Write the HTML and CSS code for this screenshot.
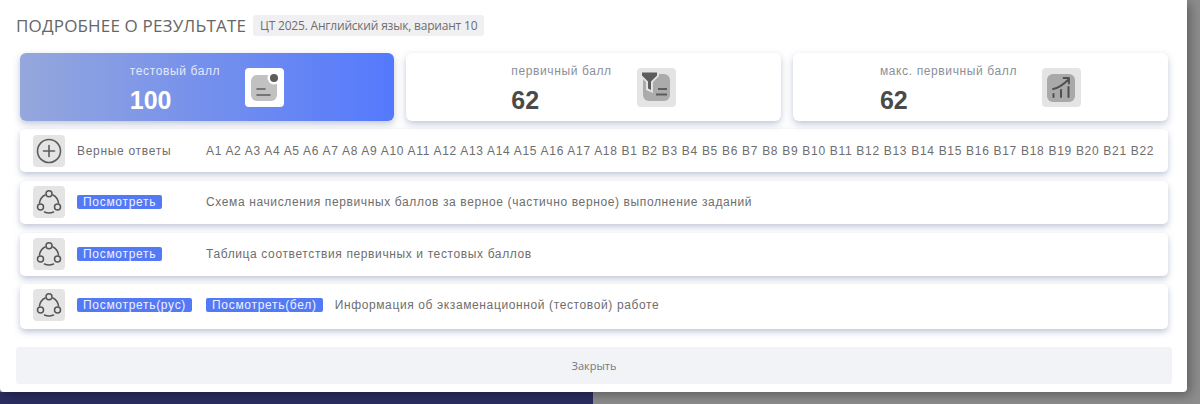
FILE: index.html
```html
<!DOCTYPE html>
<html lang="en">
<head>
    <meta charset="UTF-8">
    <meta name="viewport" content="width=device-width, initial-scale=1.0">
    <title>Подробнее о результате</title>
    <link rel="stylesheet" href="styles.css">
</head>
<body>

    <!-- Modal -->
    <div class="modal">
        <div class="modal-header">
            <h2>Подробнее о результате</h2>
            <span class="chip">ЦТ 2025. Английский язык, вариант 10</span>
        </div>

        <!-- Score cards -->
        <div class="cards">
            <div class="card card-primary">
                <div class="card-text">
                    <div class="card-label">тестовый балл</div>
                    <div class="card-value">100</div>
                </div>
                <div class="card-icon card-icon-white">
                    <svg width="39" height="39" viewBox="0 0 39 39">
                        <rect x="6" y="7" width="26" height="26" rx="6" fill="#c1c1c1"/>
                        <circle cx="29" cy="10" r="6.5" fill="#fff"/>
                        <circle cx="29" cy="10" r="4" fill="#5c5c5c"/>
                        <path d="M12 21h8M12 27h13" stroke="#5c5c5c" stroke-width="1.6" stroke-linecap="round"/>
                    </svg>
                </div>
            </div>
            <div class="card">
                <div class="card-text">
                    <div class="card-label">первичный балл</div>
                    <div class="card-value">62</div>
                </div>
                <div class="card-icon">
                    <svg width="39" height="39" viewBox="0 0 39 39">
                        <rect x="6" y="6" width="27" height="27" rx="6" fill="#ababab"/>
                        <path d="M3 2.500h19v5.500l-6 6v11l-7 -3v-8l-6 -6z" fill="#e3e3e3"/>
                        <path d="M5 4.500h15v3l-6 6v8.500l-3 -1.500v-7l-6 -6z" fill="#5c5c5c"/>
                        <path d="M21 21h9M19 26.500h11" stroke="#5c5c5c" stroke-width="1.800"/>
                    </svg>
                </div>
            </div>
            <div class="card">
                <div class="card-text">
                    <div class="card-label">макс. первичный балл</div>
                    <div class="card-value">62</div>
                </div>
                <div class="card-icon">
                    <svg width="39" height="39" viewBox="0 0 39 39">
                        <rect x="5" y="6" width="28" height="28" rx="6" fill="#a9a9a9"/>
                        <path d="M11 21c6 -1 11 -5 16 -10M21.500 10h5.500v5.500" fill="none" stroke="#4f4f4f" stroke-width="1.800" stroke-linecap="round" stroke-linejoin="round"/>
                        <path d="M11.500 26v3M19 22v7M26.500 19v10" stroke="#4f4f4f" stroke-width="2" stroke-linecap="round"/>
                    </svg>
                </div>
            </div>
        </div>

        <!-- Rows -->
        <div class="row row-answers">
            <div class="row-icon">
                <svg width="32" height="32" viewBox="0 0 32 32">
                    <circle cx="16" cy="16" r="11.500" fill="none" stroke="#5c5c5c" stroke-width="1.600"/>
                    <path d="M16 10.500v11M10.500 16h11" stroke="#5c5c5c" stroke-width="1.600" stroke-linecap="round"/>
                </svg>
            </div>
            <div class="row-label">Верные ответы</div>
            <div class="row-text">A1 A2 A3 A4 A5 A6 A7 A8 A9 A10 A11 A12 A13 A14 A15 A16 A17 A18 B1 B2 B3 B4 B5 B6 B7 B8 B9 B10 B11 B12 B13 B14 B15 B16 B17 B18 B19 B20 B21 B22</div>
        </div>

        <div class="row">
            <div class="row-icon">
                <svg width="32" height="32" viewBox="0 0 32 32">
                    <use href="#share"/>
                </svg>
            </div>
            <div class="row-label"><a class="badge" href="#">Посмотреть</a></div>
            <div class="row-text">Схема начисления первичных баллов за верное (частично верное) выполнение заданий</div>
        </div>

        <div class="row">
            <div class="row-icon">
                <svg width="32" height="32" viewBox="0 0 32 32">
                    <use href="#share"/>
                </svg>
            </div>
            <div class="row-label"><a class="badge" href="#">Посмотреть</a></div>
            <div class="row-text">Таблица соответствия первичных и тестовых баллов</div>
        </div>

        <div class="row row-last">
            <div class="row-icon">
                <svg width="32" height="32" viewBox="0 0 32 32">
                    <use href="#share"/>
                </svg>
            </div>
            <div class="row-label"><a class="badge" href="#">Посмотреть(рус)</a></div>
            <a class="badge badge-second" href="#">Посмотреть(бел)</a>
            <div class="row-text">Информация об экзаменационной (тестовой) работе</div>
        </div>

        <button class="close-btn">Закрыть</button>
    </div>

    <!-- Page behind the modal -->
    <div class="page-strip"></div>

    <svg class="icon-defs" width="0" height="0">
        <defs>
            <g id="share" fill="none" stroke="#555" stroke-width="1.500" stroke-linecap="round">
                <circle cx="16" cy="7.800" r="3"/>
                <circle cx="7.500" cy="21" r="3"/>
                <circle cx="24.500" cy="21" r="3"/>
                <path d="M12 9c-3 1.500 -5 4 -5.500 8M20 9c3 1.500 5 4 5.500 8M11.500 26c3 1.300 6 1.300 9 0"/>
            </g>
        </defs>
    </svg>
</body>
</html>
```

FILE: styles.css
```css
* {
    box-sizing: border-box;
    margin: 0;
    padding: 0;
}

body {
    width: 1200px;
    height: 404px;
    overflow: hidden;
    background: #8d8d8d;
    font-family: 'Liberation Sans', sans-serif;
}

.modal {
    position: relative;
    z-index: 1;
    width: 1187px;
    height: 392px;
    padding: 15px 15px 0 16px;
    background: #fff;
    border-radius: 0 0 4px 4px;
    box-shadow: 3px 3px 12px rgba(0, 0, 0, 0.35);
}

.page-strip {
    width: 593px;
    height: 12px;
    background: #2b2d62;
}

.icon-defs {
    display: block;
}

/* Header */
.modal-header {
    display: flex;
    align-items: center;
    gap: 7px;
    height: 21px;
    margin-bottom: 17px;
}

.modal-header h2 {
    font-family: 'Open Sans', sans-serif;
    font-size: 17px;
    font-weight: 400;
    letter-spacing: 0.17px;
    text-transform: uppercase;
    color: #666;
    white-space: nowrap;
}

.chip {
    height: 21px;
    padding: 0 7px;
    font-family: 'Open Sans', sans-serif;
    font-size: 12px;
    letter-spacing: -0.2px;
    line-height: 21px;
    color: #6e6e6e;
    background: #f0f0f2;
    border-radius: 3px;
    white-space: nowrap;
}

/* Score cards */
.cards {
    display: flex;
    gap: 12px;
    margin: 0 4px 8px;
}

.card {
    flex: 1;
    display: flex;
    justify-content: center;
    align-items: center;
    gap: 25px;
    height: 68px;
    background: #fff;
    border-radius: 6px;
    box-shadow: 0 3px 7px rgba(90, 110, 150, 0.38);
}

.card-primary {
    flex: 0 0 374px;
    background: linear-gradient(90deg, #95a7dc, #5479fd);
}

.card-text {
    padding-top: 3px;
}

.card-label {
    font-size: 12px;
    letter-spacing: 0.62px;
    color: #8a8f99;
    margin-bottom: 8px;
}

.card-value {
    font-size: 25px;
    line-height: 28px;
    font-weight: bold;
    color: #4a4a4a;
}

.card-primary .card-label {
    color: #e4e9fa;
}

.card-primary .card-value {
    color: #fff;
}

.card-icon {
    width: 39px;
    height: 39px;
    background: #e4e4e4;
    border-radius: 4px;
}

.card-icon-white {
    background: #fff;
}

.card-icon svg,
.row-icon svg {
    display: block;
}

/* Rows */
.row {
    display: flex;
    align-items: center;
    height: 43px;
    margin: 0 4px 9px;
    padding: 0 0 2px 13px;
    background: #fff;
    border-radius: 5px;
    box-shadow: 0 3px 6px rgba(90, 110, 150, 0.38);
    font-size: 12px;
    letter-spacing: 0.7px;
    color: #6e6e6e;
    white-space: nowrap;
}

.row-answers {
    padding-bottom: 0;
}

.row-last {
    height: 45px;
    margin-top: -1px;
    margin-bottom: 18px;
    padding-bottom: 3px;
}

.row-icon {
    width: 32px;
    height: 32px;
    margin-right: 12px;
    background: #e4e4e4;
    border-radius: 4px;
}

.row-label {
    width: 129px;
}

.row-text {
    letter-spacing: 0.62px;
}

.row-answers .row-text {
    letter-spacing: 0.69px;
}

.badge {
    display: inline-block;
    height: 14px;
    padding: 0 6px;
    line-height: 14px;
    color: #eef1ff;
    background: #5479f5;
    border-radius: 2px;
    text-decoration: none;
}

.badge-second {
    margin-right: 12px;
}

/* Footer button */
.close-btn {
    display: block;
    width: 1156px;
    height: 37px;
    border: none;
    border-radius: 3px;
    background: #f2f3f7;
    font-family: 'Open Sans', sans-serif;
    font-size: 11px;
    color: #777;
}
```
